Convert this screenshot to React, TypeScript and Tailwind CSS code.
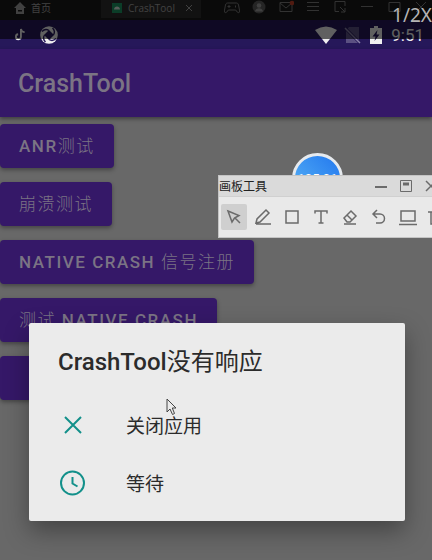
import React from "react";

const SANS = "font-['Roboto','Noto_Sans_CJK_SC',sans-serif]";
const ICON = "fill-none stroke-current";

const actions: { name: string; parts: { text: string; weight: string }[] }[] = [
  { name: "anr", parts: [{ text: "ANR", weight: "font-medium" }, { text: "测试", weight: "font-light" }] },
  { name: "crash", parts: [{ text: "崩溃测试", weight: "font-light" }] },
  { name: "signal", parts: [{ text: "NATIVE CRASH ", weight: "font-medium" }, { text: "信号注册", weight: "font-light" }] },
  { name: "native", parts: [{ text: "测试", weight: "font-light" }, { text: " NATIVE CRASH", weight: "font-medium" }] },
];

const BUTTON = "h-11 rounded-[4px] bg-[#351868] px-[19px] text-[17px] tracking-[0.09em] text-[#7b7484] shadow-[0_2px_4px_rgba(0,0,0,0.35)]";

const windowIcons: { label: string; art: React.ReactNode }[] = [
  {
    label: "Gamepad",
    art: <path d="M4 3h8c1 0 2 0 2.500 2l1.200 6c.2 2-1.700 2-2.500 1l-1.500-2H4.300l-1.500 2c-.8 1-2.700 1-2.500-1l1.200-6C2 3 3 3 4 3zM5 5v3M3.500 6.500h3M11.500 5.500v2" />,
  },
  {
    label: "Account",
    art: (
      <>
        <circle cx="8" cy="7" r="6.500" fill="#5c5c5c" stroke="none" />
        <circle cx="8" cy="5.500" r="2.300" fill="#a0a0a0" stroke="none" />
        <path d="M4 11.500c.5-4.500 7.500-4.500 8 0z" fill="#a0a0a0" stroke="none" />
      </>
    ),
  },
  {
    label: "Mail",
    art: (
      <>
        <path d="M2 2.500h12v9H2zM2 3l6 5 6-5" />
        <circle cx="14" cy="3" r="2.300" fill="#c8412a" stroke="none" />
      </>
    ),
  },
  { label: "Menu", art: <path d="M2 2.500h12M2 6.500h12M2 10.500h12" /> },
  { label: "Pick", art: <path d="M7 11.500H3v-10h10V6M8 7l5 5m0-4v4H9" /> },
  { label: "Minimise", art: <path d="M2 6.500h12" /> },
  { label: "Maximise", art: <path d="M3 2.500h11v9H3z" /> },
  { label: "Close", art: <path d="m3 2 10 10M13 2 3 12" /> },
];

const tools: { label: string; art: React.ReactNode }[] = [
  { label: "Select", art: <path d="m4 4 11 4.500-4.500 2.500L8 15zM11 11l5 5" /> },
  { label: "Pencil", art: <path d="m3 16 1-4 9-9 3 3-9 9zM3 17h15" /> },
  { label: "Rectangle", art: <path d="M4 4h12v12H4z" /> },
  { label: "Text", art: <path d="M4 6.500V4h12v2.500M10 4v12M7.500 16h5" /> },
  { label: "Eraser", art: <path d="m4 11 7-7 5 5-6 6H7zM7 8l5 5M4 17h12" /> },
  { label: "Undo", art: <path d="M8 3 4 7l4 4M4 7h7a4.500 4.500 0 0 1 0 9H7" /> },
  { label: "Board", art: <path d="M3 4h14v10H3zM1 17.500h18" /> },
  { label: "Delete", art: <path d="M1 5h18M4 5v12h12V5M8 8v6M12 8v6" /> },
];

function EmulatorBar() {
  return (
    <div className="flex h-[20px] items-start bg-[#1a1a1a] text-[#a3a3a3] font-['Open_Sans','Noto_Sans_CJK_SC',sans-serif]">
      <div className="flex h-4 w-[101px] shrink-0 items-center gap-[5px] pl-[14px] text-[10px]">
        <svg viewBox="0 0 12 12" className="size-3 fill-current">
          <path d="M6 0 12 6h-2v6H2V6H0zM4 8v1.500h4V8z" fillRule="evenodd" />
        </svg>
        首页
      </div>
      <div className="flex h-[18px] w-[100px] shrink-0 items-center bg-[#2f2f2f] pb-[2px] pl-[11px] text-[10px]">
        <svg viewBox="0 0 10 10" className="mr-[6px] size-[10px]">
          <path d="M0 0h10v10H0z" fill="#1d9a64" />
          <path d="M2 6.500c0-4 6-4 6 0z" fill="#dbe8e1" />
        </svg>
        CrashTool
        <button aria-label="Close tab" className="ml-auto mr-2">
          <svg viewBox="0 0 8 8" className={`size-2 ${ICON}`}>
            <path d="m1 1 6 6M7 1 1 7" />
          </svg>
        </button>
      </div>
      <div className="ml-auto flex shrink-0 gap-[11px] pr-[3px] text-[#7d7d7d]">
        {windowIcons.map((icon) => (
          <button key={icon.label} aria-label={icon.label}>
            <svg viewBox="0 0 16 16" className={`size-4 ${ICON}`}>{icon.art}</svg>
          </button>
        ))}
      </div>
    </div>
  );
}

function StatusBar() {
  return (
    <div className="flex h-[29px] items-center bg-[#26185a] pl-[14px] pr-2 text-[#f0f0f0]">
      <svg viewBox="0 0 12 14" className="h-[13px] w-3 fill-none stroke-current stroke-2">
        <path d="M7 1v8.500a2.700 2.700 0 1 1-3-2.800M7 1c.5 2.500 2 3.500 4 3.500" />
      </svg>
      <svg viewBox="0 0 18 18" className="ml-[14px] size-[18px]">
        <circle cx="9" cy="9" r="8.800" fill="#f0f0f0" />
        <path d="M9 4 14 9 9 14 4 9z" fill="#26185a" />
        <path d="M9 4.500C6.500 3 4 3.500 2 5.500M13.500 9c1.500-2.500 1-5-1-7M9 13.500c2.500 1.500 5 1 7-1M4.500 9c-1.500 2.500-1 5 1 7" fill="none" stroke="#26185a" strokeWidth="1.400" />
      </svg>
      <div className="ml-auto flex items-center">
        <svg viewBox="0 0 22 18" className="h-[18px] w-[22px] fill-current">
          <path d="M0 4Q11-3 22 4L11 18z" />
        </svg>
        <svg viewBox="0 0 17 18" className="ml-[7px] h-[18px] w-[17px]">
          <path d="M5 1h10v16H2V5z" fill="#5b5182" />
          <path d="m1 2 15 15" stroke="#26185a" strokeWidth="3" />
          <path d="m1 2 15 15" stroke="#8a83a8" strokeWidth="1.500" />
        </svg>
        <svg viewBox="0 0 12 18" className="ml-[9px] h-[18px] w-3">
          <path d="M4 0h4v2h4v16H0V2h4z" fill="#f0f0f0" />
          <path d="M7.500 4 2.500 10.500H5.500L4.500 15 9.500 8.500H6.500z" fill="#26185a" />
        </svg>
        <span className="ml-[9px] text-[17px] leading-5">9:51</span>
      </div>
    </div>
  );
}

function DrawingTools() {
  return (
    <section className="absolute left-[218px] right-0 top-[175px] overflow-hidden border border-r-0 border-[#c4c4c4] bg-[#e9e9e9] text-[#6b6b6b]">
      <header className="flex h-[21px] items-center border-b border-[#d0d0d0] bg-[#dadada]">
        <h2 className="shrink-0 text-[12px] leading-5 text-[#222] font-['Noto_Sans_CJK_SC',sans-serif]">画板工具</h2>
        <div className="-mr-[6px] ml-auto flex shrink-0 gap-[11px]">
          <button aria-label="Minimise tools">
            <svg viewBox="0 0 14 14" className={`size-[14px] stroke-2 ${ICON}`}><path d="M1 8h12" /></svg>
          </button>
          <button aria-label="Restore tools">
            <svg viewBox="0 0 14 14" className={`size-[14px] ${ICON}`}>
              <path d="M1.500 1.500h11v11h-11z" />
              <path d="M4 5h6" strokeWidth="3" />
            </svg>
          </button>
          <button aria-label="Close tools">
            <svg viewBox="0 0 14 14" className={`size-[14px] ${ICON}`}><path d="m2 2 10 10M12 2 2 12" strokeWidth="1.500" /></svg>
          </button>
        </div>
      </header>
      <div className="flex h-10 items-center gap-[3px] pl-[2px]">
        {tools.map((tool, i) => (
          <button
            key={tool.label}
            aria-label={tool.label}
            className={`flex size-[26px] shrink-0 items-center justify-center rounded-xs ${i === 0 ? "bg-[#cfcfcf]" : ""}`}
          >
            <svg viewBox="0 0 20 20" className={`size-5 ${ICON}`} strokeWidth="1.500">{tool.art}</svg>
          </button>
        ))}
      </div>
    </section>
  );
}

function NotRespondingDialog() {
  return (
    <section
      role="dialog"
      aria-labelledby="anr-title"
      className="absolute left-[29px] right-[27px] top-[323px] rounded-xs bg-[#ebebeb] px-[29px] pb-2 pt-[23px] text-[#2b2b2b] shadow-[0_10px_24px_rgba(0,0,0,0.35)]"
    >
      <h2 id="anr-title" className="mb-[19px] text-[24px] font-medium leading-8">
        CrashTool<span className="font-normal">没有响应</span>
      </h2>
      <button className="flex h-[58px] w-full items-center gap-10 text-[19px]">
        <svg viewBox="0 0 28 28" className="size-7 fill-none stroke-[#12908a] stroke-2">
          <path d="m7 5 16 16M23 5 7 21" />
        </svg>
        <span className="pt-[2px]">关闭应用</span>
      </button>
      <button className="flex h-[58px] w-full items-center gap-10 text-[19px]">
        <svg viewBox="0 0 28 28" className="size-7 fill-none stroke-[#12908a] stroke-2">
          <circle cx="14.500" cy="13" r="11.500" />
          <path d="M14.500 7v6.500l5 3" />
        </svg>
        <span className="pt-[2px]">等待</span>
      </button>
    </section>
  );
}

export default function App() {
  return (
    <div className={`relative min-h-screen overflow-hidden bg-[#686868] ${SANS}`}>
      <EmulatorBar />
      <StatusBar />
      <header className="flex h-[68px] items-center bg-[#351868] px-[18px] pt-[2px] shadow-[0_2px_4px_rgba(0,0,0,0.4)]">
        <h1 className="text-[25px] font-medium leading-8 text-[#7b7484]">CrashTool</h1>
      </header>
      <main className="flex flex-col items-start gap-[14px] pt-[7px]">
        {actions.map((action) => (
          <button key={action.name} className={`${BUTTON} pt-[2px]`}>
            {action.parts.map((part) => (
              <span key={part.text} className={part.weight}>{part.text}</span>
            ))}
          </button>
        ))}
        <button aria-label="More tests" className={`${BUTTON} w-1/2`} />
      </main>

      <div className="pointer-events-none absolute inset-x-0 top-0 h-[39px] bg-black/60" />
      <span className="absolute right-0 top-[7px] text-[19px] leading-4 text-[#b4b4b4] font-['Noto_Sans',sans-serif]">1/2X</span>

      <div className="absolute left-[292px] top-[153px] flex size-[51px] items-center justify-center rounded-full border-3 border-[#e6eaee] bg-linear-to-tr from-[#5bb4f5] to-[#2277ee] text-[13px] text-white">
        105.01
      </div>
      <DrawingTools />
      <NotRespondingDialog />
      <svg viewBox="0 0 12 18" className="absolute left-[166px] top-[398px] h-[18px] w-3">
        <path d="M1 1v13l3-3 2.500 5.500 2-1L6.300 10H10z" fill="#ebebeb" stroke="#444" />
      </svg>
    </div>
  );
}
